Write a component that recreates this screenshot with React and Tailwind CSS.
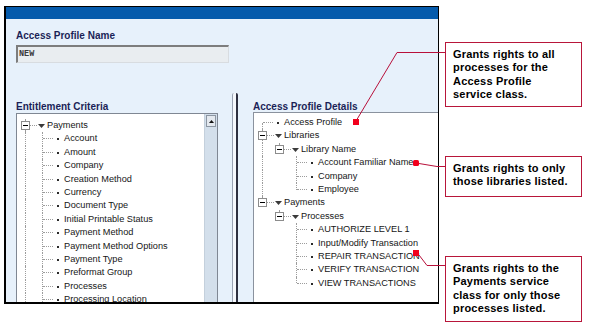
import React from 'react';

// Tree data for the two panels
const entitlementTree = [
  {
    label: 'Payments',
    children: [
      'Account',
      'Amount',
      'Company',
      'Creation Method',
      'Currency',
      'Document Type',
      'Initial Printable Status',
      'Payment Method',
      'Payment Method Options',
      'Payment Type',
      'Preformat Group',
      'Processes',
      'Processing Location',
    ].map((label) => ({ label })),
  },
];

const detailsTree = [
  { label: 'Access Profile' },
  {
    label: 'Libraries',
    children: [
      {
        label: 'Library Name',
        children: [{ label: 'Account Familiar Name' }, { label: 'Company' }, { label: 'Employee' }],
      },
    ],
  },
  {
    label: 'Payments',
    children: [
      {
        label: 'Processes',
        children: [
          { label: 'AUTHORIZE LEVEL 1' },
          { label: 'Input/Modify Transaction' },
          { label: 'REPAIR TRANSACTION' },
          { label: 'VERIFY TRANSACTION' },
          { label: 'VIEW TRANSACTIONS' },
        ],
      },
    ],
  },
];

// Flatten a tree into rows, keeping which connector lines continue
function flatten(nodes, open, level = 0, guides = [], out = []) {
  nodes.forEach((node, i) => {
    const isLast = !open && i === nodes.length - 1;
    const isFirst = !open && level === 0 && i === 0;
    out.push({ label: node.label, level, folder: !!node.children, isLast, isFirst, guides });
    if (node.children) flatten(node.children, open, level + 1, [...guides, !isLast], out);
  });
  return out;
}

const dot = 'border-dotted border-[#9c9c9c]';

function TreeRow({ row }) {
  let vertical = 'top-0 bottom-0';
  if (row.isFirst) vertical = 'top-[6.7px] bottom-0';
  else if (row.isLast) vertical = 'top-0 h-[6.7px]';

  return (
    <div className="flex h-[13.4px] items-stretch">
      {row.guides.map((g, k) => (
        <span key={k} className="relative w-[17px] shrink-0">
          {g && <span className={`absolute left-[4px] top-0 bottom-0 border-l ${dot}`} />}
        </span>
      ))}
      {row.folder ? (
        <span className="relative flex items-center whitespace-nowrap pl-[26px]">
          <span className={`absolute left-[4px] top-0 h-[2px] border-l ${dot}`} />
          {!row.isLast && <span className={`absolute left-[4px] top-[11px] bottom-0 border-l ${dot}`} />}
          <span className="absolute left-0 top-[2px] h-[9px] w-[9px] border border-[#8c8c8c] bg-white">
            <span className="absolute left-[1px] top-[3px] h-px w-[5px] bg-black" />
          </span>
          <span className={`absolute left-[9px] top-[6px] w-[7px] border-t ${dot}`} />
          <svg className="absolute left-[17px] top-[5px]" width="7" height="4" viewBox="0 0 7 4">
            <polygon points="0,0 7,0 3.5,4" fill="#3a3a3a" />
          </svg>
          {row.label}
        </span>
      ) : (
        <span className="relative flex items-center whitespace-nowrap pl-[26px]">
          <span className={`absolute left-[4px] border-l ${dot} ${vertical}`} />
          <span className={`absolute left-[5px] top-[6px] w-[10px] border-t ${dot}`} />
          <span className="absolute left-[19px] top-[6px] h-[2px] w-[2px] bg-[#2a2a2a]" />
          {row.label}
        </span>
      )}
    </div>
  );
}

function Tree({ rows }) {
  return (
    <div className="text-[9.2px] leading-[13.4px] text-[#161616]">
      {rows.map((row, i) => (
        <TreeRow key={i} row={row} />
      ))}
    </div>
  );
}

function Callout({ className, lines }) {
  return (
    <div
      className={`w-[137px] border border-[#b8163a] bg-white pl-[7px] pt-[5px] text-[11px] font-bold leading-[13.3px] tracking-[0.2px] text-black ${className}`}
    >
      {lines.map((line) => (
        <div key={line} className="whitespace-nowrap">
          {line}
        </div>
      ))}
    </div>
  );
}

export default function App() {
  const leftRows = flatten(entitlementTree, true);
  const rightRows = flatten(detailsTree, false);

  return (
    <div className="relative h-[336px] w-[595px] overflow-hidden bg-white font-['Liberation_Sans',Arial,sans-serif]">
      <div className="flex pl-[4px] pt-[6px]">
        {/* Application window */}
        <div className="flex h-[298px] w-[435px] flex-col border-t border-r border-b-2 border-l-2 border-black bg-[#e7f1fb]">
          <div className="h-[12px] bg-[#055bac]" />

          <div className="pl-[10px] pt-[11px]">
            <h2 className="text-[10px] font-bold leading-[12px] text-[#1b1f57]">Access Profile Name</h2>
            <div className="mt-[3px] flex h-[18px] w-[213px] items-center border-t-2 border-l-2 border-r border-b border-t-[#7d7d7d] border-l-[#7d7d7d] border-r-[#d8dce0] border-b-[#d8dce0] bg-[#e9edf0] pl-[1px] font-['Liberation_Mono',monospace] text-[8.5px] font-bold text-[#3c3c3c]">
              NEW
            </div>
          </div>

          <div className="mt-[30px] flex min-h-0 flex-1">
            {/* Entitlement Criteria */}
            <div className="ml-[10px] flex w-[202px] flex-col">
              <h2 className="mt-[8px] text-[10px] font-bold leading-[12px] text-[#1b1f57]">Entitlement Criteria</h2>
              <div className="flex min-h-0 flex-1 border-t border-l border-r border-[#7f8793] bg-white">
                <div className="min-w-0 flex-1 overflow-hidden pl-[4px] pt-[5px]">
                  <Tree rows={leftRows} />
                </div>
                <div className="w-[13px] border-l border-[#c4d0dc] bg-[#d3dfeb] pt-[1px]">
                  <div className="ml-[1px] flex h-[12px] w-[10px] items-center justify-center border border-[#8c96a2] bg-[#e4e9ef]">
                    <svg width="5" height="3" viewBox="0 0 5 3">
                      <polygon points="2.5,0 5,3 0,3" fill="#111" />
                    </svg>
                  </div>
                </div>
              </div>
            </div>

            {/* Splitter */}
            <div className="ml-[14px] w-[6px] rounded-t-[2px] border-l border-r-2 border-l-[#9aa3b3] border-r-[#2e3040] bg-[#f5f8fc]" />

            {/* Access Profile Details */}
            <div className="ml-[15px] flex min-w-0 flex-1 flex-col">
              <h2 className="mt-[8px] text-[10px] font-bold leading-[12px] text-[#1b1f57]">Access Profile Details</h2>
              <div className="-mt-px min-h-0 flex-1 overflow-hidden border-t border-l border-[#8a929e] bg-white pl-[4px] pt-[3px]">
                <Tree rows={rightRows} />
              </div>
            </div>
          </div>
        </div>

        {/* Callouts */}
        <div className="ml-[6px] flex flex-col">
          <Callout
            className="mt-[36px] h-[65px]"
            lines={['Grants rights to all', 'processes for the', 'Access Profile', 'service class.']}
          />
          <Callout className="mt-[49px] h-[41px]" lines={['Grants rights to only', 'those libraries listed.']} />
          <Callout
            className="mt-[59px] h-[66px]"
            lines={['Grants rights to the', 'Payments service', 'class for only those', 'processes listed.']}
          />
        </div>
      </div>

      {/* Leader lines */}
      <svg className="pointer-events-none absolute left-0 top-0" width="595" height="336" viewBox="0 0 595 336">
        <polyline points="445,52.5 397,52.5 356,121" fill="none" stroke="#b8103a" strokeWidth="1" />
        <polyline points="419,163.5 437,166.5 445,166.5" fill="none" stroke="#b8103a" strokeWidth="1" />
        <polyline points="419,255 427,265.5 445,265.5" fill="none" stroke="#b8103a" strokeWidth="1" />
        <rect x="353" y="119" width="6" height="6" fill="#f2001c" />
        <rect x="413" y="160" width="6" height="6" rx="1.5" fill="#f2001c" />
        <rect x="413" y="250" width="6" height="6" fill="#f2001c" />
      </svg>
    </div>
  );
}
